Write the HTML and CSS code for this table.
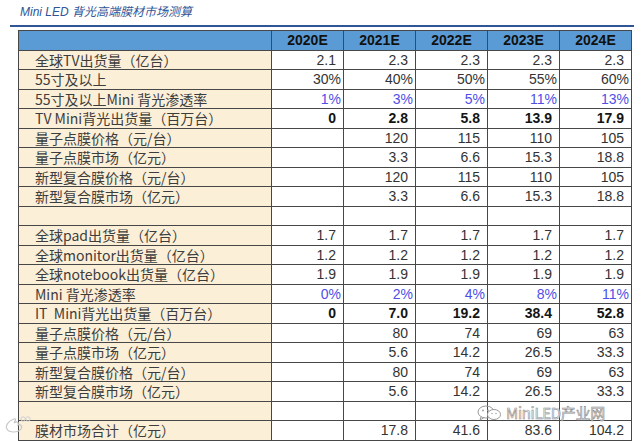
FILE: index.html
```html
<!DOCTYPE html>
<html lang="zh-CN">
<head>
<meta charset="utf-8">
<title>Mini LED 背光高端膜材市场测算</title>
<link rel="stylesheet" href="styles.css">
</head>
<body>
<div class="page">
  <div class="title">Mini LED 背光高端膜材市场测算</div>
  <div class="rule"></div>
  <table class="sheet">
    <colgroup>
      <col class="c-label"><col class="c-num"><col class="c-num"><col class="c-num"><col class="c-num"><col class="c-num">
    </colgroup>
    <thead>
      <tr class="head"><th></th><th>2020E</th><th>2021E</th><th>2022E</th><th>2023E</th><th>2024E</th></tr>
    </thead>
    <tbody>
      <tr><td class="lbl">全球TV出货量（亿台）</td><td>2.1</td><td>2.3</td><td>2.3</td><td>2.3</td><td>2.3</td></tr>
      <tr class="pct"><td class="lbl">55寸及以上</td><td>30%</td><td>40%</td><td>50%</td><td>55%</td><td>60%</td></tr>
      <tr class="pct blue"><td class="lbl">55寸及以上Mini 背光渗透率</td><td>1%</td><td>3%</td><td>5%</td><td>11%</td><td>13%</td></tr>
      <tr class="bold"><td class="lbl">TV Mini背光出货量（百万台）</td><td>0</td><td>2.8</td><td>5.8</td><td>13.9</td><td>17.9</td></tr>
      <tr><td class="lbl">量子点膜价格（元/台）</td><td></td><td>120</td><td>115</td><td>110</td><td>105</td></tr>
      <tr><td class="lbl">量子点膜市场（亿元）</td><td></td><td>3.3</td><td>6.6</td><td>15.3</td><td>18.8</td></tr>
      <tr><td class="lbl">新型复合膜价格（元/台）</td><td></td><td>120</td><td>115</td><td>110</td><td>105</td></tr>
      <tr><td class="lbl">新型复合膜市场（亿元）</td><td></td><td>3.3</td><td>6.6</td><td>15.3</td><td>18.8</td></tr>
      <tr><td class="lbl"></td><td></td><td></td><td></td><td></td><td></td></tr>
      <tr><td class="lbl">全球pad出货量（亿台）</td><td>1.7</td><td>1.7</td><td>1.7</td><td>1.7</td><td>1.7</td></tr>
      <tr><td class="lbl">全球monitor出货量（亿台）</td><td>1.2</td><td>1.2</td><td>1.2</td><td>1.2</td><td>1.2</td></tr>
      <tr><td class="lbl">全球notebook出货量（亿台）</td><td>1.9</td><td>1.9</td><td>1.9</td><td>1.9</td><td>1.9</td></tr>
      <tr class="pct blue"><td class="lbl">Mini 背光渗透率</td><td>0%</td><td>2%</td><td>4%</td><td>8%</td><td>11%</td></tr>
      <tr class="bold"><td class="lbl">IT&nbsp; Mini背光出货量（百万台）</td><td>0</td><td>7.0</td><td>19.2</td><td>38.4</td><td>52.8</td></tr>
      <tr><td class="lbl">量子点膜价格（元/台）</td><td></td><td>80</td><td>74</td><td>69</td><td>63</td></tr>
      <tr><td class="lbl">量子点膜市场（亿元）</td><td></td><td>5.6</td><td>14.2</td><td>26.5</td><td>33.3</td></tr>
      <tr><td class="lbl">新型复合膜价格（元/台）</td><td></td><td>80</td><td>74</td><td>69</td><td>63</td></tr>
      <tr><td class="lbl">新型复合膜市场（亿元）</td><td></td><td>5.6</td><td>14.2</td><td>26.5</td><td>33.3</td></tr>
      <tr><td class="lbl"></td><td></td><td></td><td></td><td></td><td></td></tr>
      <tr><td class="lbl">膜材市场合计（亿元）</td><td></td><td>17.8</td><td>41.6</td><td>83.6</td><td>104.2</td></tr>
    </tbody>
  </table>

  <div class="wm-right">
    <svg class="wm-icon" width="26" height="16" viewBox="0 0 26 16">
      <ellipse cx="9" cy="7" rx="8" ry="6" fill="none" stroke="#9a9a9a" stroke-width="1"/>
      <path d="M4 12 L3 15 L7 12.6" fill="none" stroke="#9a9a9a" stroke-width="1"/>
      <ellipse cx="17" cy="9.5" rx="6.5" ry="5" fill="#fff" stroke="#9a9a9a" stroke-width="1"/>
      <circle cx="6" cy="5.5" r="0.9" fill="#9a9a9a"/>
      <circle cx="11" cy="5.5" r="0.9" fill="#9a9a9a"/>
      <circle cx="15" cy="8.5" r="0.7" fill="#9a9a9a"/>
      <circle cx="19" cy="8.5" r="0.7" fill="#9a9a9a"/>
    </svg>
    <span class="wm-text">MiniLED产业网</span>
  </div>

  <div class="wm-left">
    <svg width="30" height="22" viewBox="0 0 30 22">
      <path d="M11 6 C5 8 2 13 4 16 C6 20 15 20 18 16 C20 13 17 11 15 12 C16 9 14 8 11 10 C13 7 13 5 11 6 Z" fill="none" stroke="#c8c8c8" stroke-width="1.2"/>
      <circle cx="20" cy="6" r="2.2" fill="none" stroke="#d0d0d0" stroke-width="1"/>
      <circle cx="25" cy="6" r="2.2" fill="none" stroke="#d0d0d0" stroke-width="1"/>
    </svg>
  </div>
</div>
</body>
</html>
```

FILE: styles.css
```css
html, body {
  margin: 0;
  padding: 0;
  background: #ffffff;
}

.page {
  position: relative;
  width: 641px;
  height: 441px;
  overflow: hidden;
}

.title {
  padding: 5px 0 0 20px;
  height: 15px;
  line-height: 15px;
  font-family: "Liberation Sans", "Noto Sans CJK SC", sans-serif;
  font-size: 12px;
  font-style: italic;
  color: #2f5597;
}

.rule {
  margin: 5px 0 0 10px;
  width: 624px;
  height: 2px;
  background: #2f5597;
}

.sheet {
  margin: 3px 0 0 18px;
  border-collapse: collapse;
  table-layout: fixed;
  width: 613px;
}

.c-label { width: 253px; }
.c-num { width: 72px; }

.sheet th,
.sheet td {
  border: 1px solid #474747;
  padding: 0 7px 0 0;
  height: 18.5px;
  line-height: 16px;
  font-family: "Liberation Sans", Arial, sans-serif;
  font-size: 14px;
  color: #333333;
  text-align: right;
  white-space: nowrap;
  overflow: hidden;
  background: #ffffff;
}

.sheet .head th {
  background: #5b9bd5;
  font-weight: bold;
  color: #111111;
  text-align: center;
  padding: 0;
}

.sheet td.lbl {
  background: #fcefd7;
  text-align: left;
  padding: 0 0 0 16px;
  font-family: "Noto Sans CJK SC", "Noto Sans", sans-serif;
  font-size: 14px;
  color: #3d3d3d;
}

.sheet tr.pct td {
  padding-right: 2px;
}

.sheet tr.pct td.lbl {
  padding: 0 0 0 16px;
}

.sheet tr.blue td {
  color: #4f4fe6;
}

.sheet tr.blue td.lbl {
  color: #3d3d3d;
}

.sheet tr.bold td {
  font-weight: bold;
  color: #141414;
}

.sheet tr.bold td.lbl {
  font-weight: normal;
  color: #3d3d3d;
}

.wm-right {
  position: absolute;
  left: 477px;
  top: 404px;
  display: flex;
  align-items: center;
  gap: 3px;
}

.wm-text {
  font-family: "Noto Sans CJK SC", "Noto Sans", sans-serif;
  font-size: 15px;
  line-height: 18px;
  color: rgba(255, 255, 255, 0.8);
  -webkit-text-stroke: 0.6px #8c8c8c;
  letter-spacing: -0.3px;
}

.wm-left {
  position: absolute;
  left: 3px;
  top: 413px;
  display: flex;
  align-items: center;
}
```
